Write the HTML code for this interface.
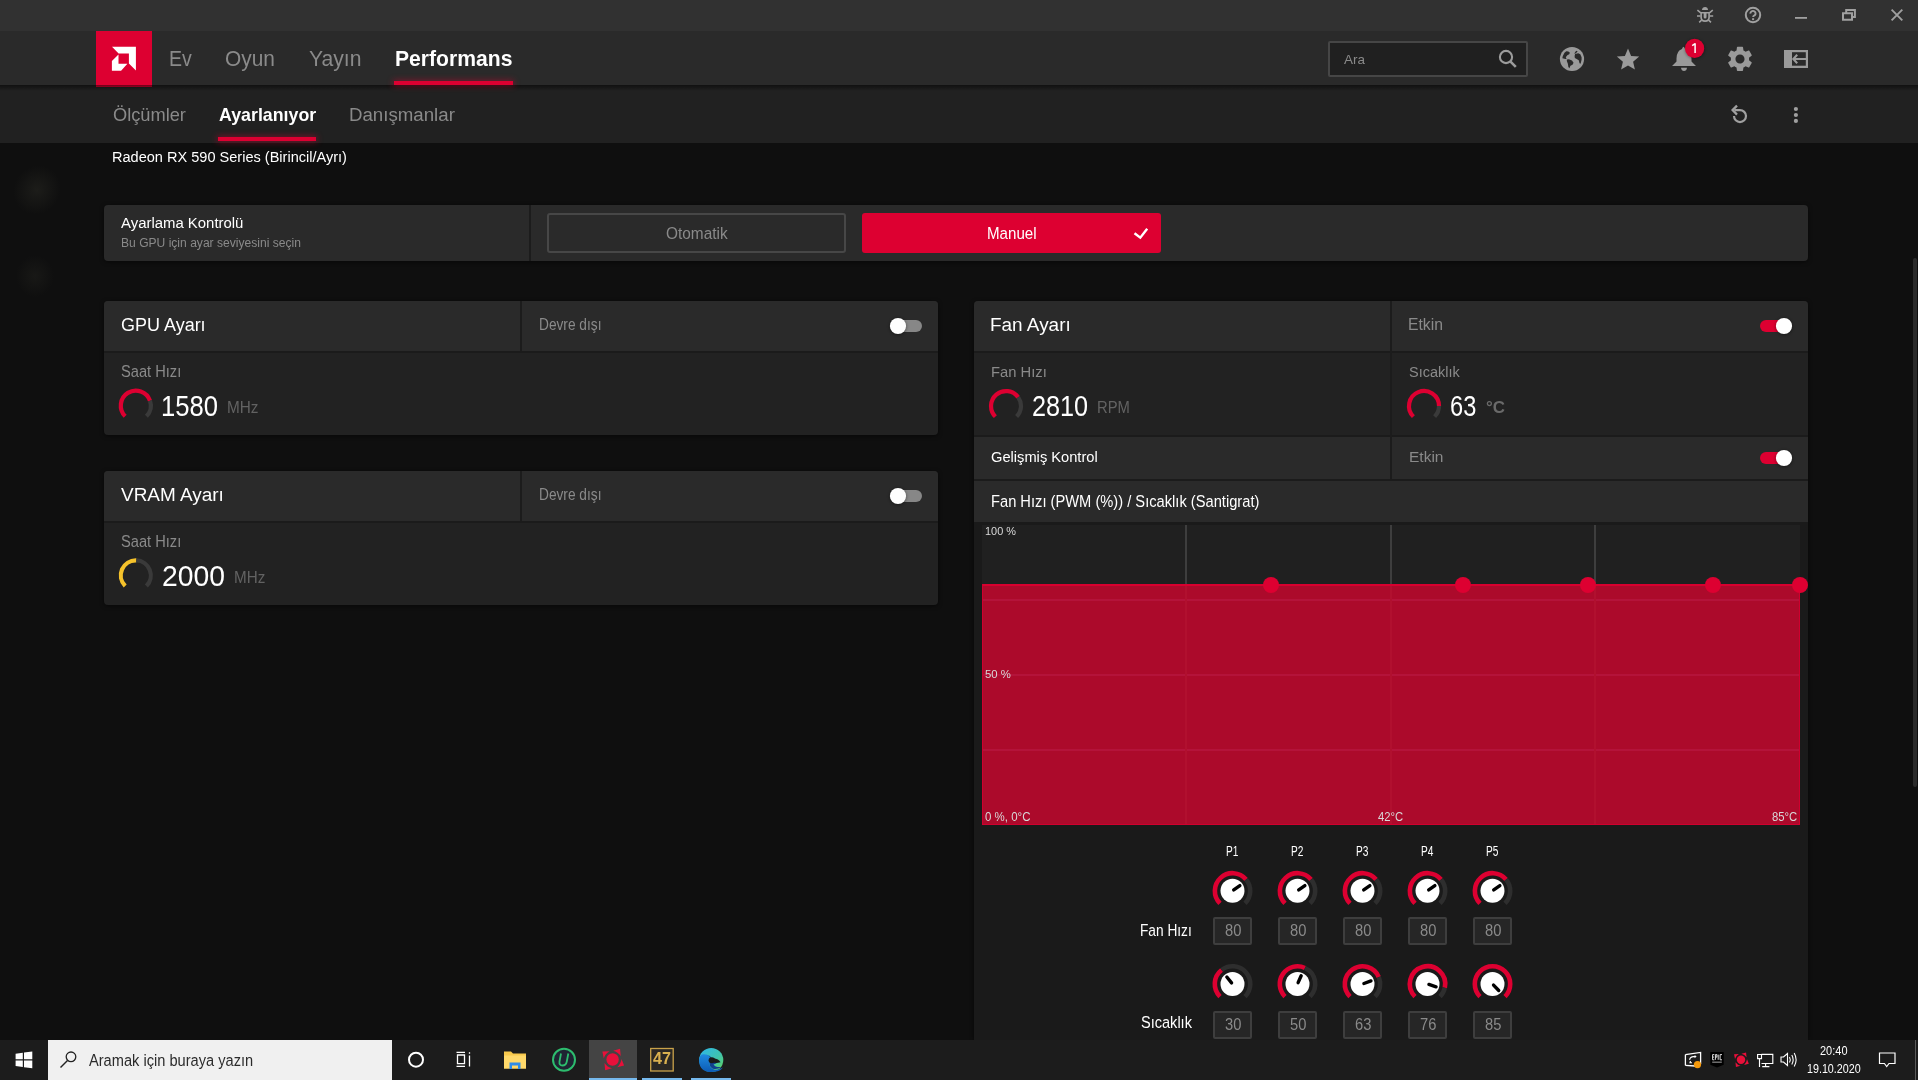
<!DOCTYPE html>
<html><head><meta charset="utf-8"><title>Radeon</title>
<style>
html,body{margin:0;padding:0;width:1918px;height:1080px;overflow:hidden;background:#0f0f0f;}
.b{position:absolute;}
.t{position:absolute;white-space:nowrap;transform-origin:0 0;font-family:"Liberation Sans",sans-serif;}
</style></head>
<body>
<!-- window chrome -->
<div class="b" style="left:0;top:0;width:1918px;height:31px;background:#313131"></div>
<div class="b" style="left:0;top:31px;width:1918px;height:54px;background:#2a2a2a"></div>
<div class="b" style="left:0;top:85px;width:1918px;height:58px;background:#212121"></div>
<div class="b" style="left:96px;top:31px;width:56px;height:56px;background:#dd0031"></div>
<div class="b" style="left:0;top:85px;width:1918px;height:6px;background:linear-gradient(rgba(0,0,0,.5),rgba(0,0,0,0))"></div>
<div class="b" style="left:394px;top:81px;width:119px;height:4px;background:#dd0031;box-shadow:0 0 6px 1px rgba(221,0,49,.45)"></div>
<div class="b" style="left:218px;top:137px;width:98px;height:4px;background:#dd0031;box-shadow:0 0 6px 1px rgba(221,0,49,.45)"></div>
<div class="b" style="left:1328px;top:41px;width:196px;height:32px;border:2px solid #464646;background:#202020;border-radius:2px"></div>
<!-- faint blobs -->
<div class="b" style="left:14px;top:165px;width:46px;height:50px;transform:rotate(35deg);background:radial-gradient(closest-side,rgba(42,42,36,.5),rgba(20,20,20,0));"></div>
<div class="b" style="left:16px;top:255px;width:38px;height:42px;background:radial-gradient(closest-side,rgba(38,38,33,.4),rgba(20,20,20,0));"></div>
<!-- panel: Ayarlama -->
<div class="b" style="left:104px;top:205px;width:1704px;height:56px;background:#2a2a2a;border-radius:4px;box-shadow:0 1px 4px rgba(0,0,0,.55)"></div>
<div class="b" style="left:529px;top:205px;width:2px;height:56px;background:#1c1c1c"></div>
<div class="b" style="left:547px;top:213px;width:295px;height:36px;border:2px solid #474747;border-radius:3px;background:#2a2a2a"></div>
<div class="b" style="left:862px;top:213px;width:299px;height:40px;background:#dd0031;border-radius:3px"></div>
<!-- GPU panel -->
<div class="b" style="left:104px;top:301px;width:834px;height:134px;background:#222222;border-radius:4px;box-shadow:0 1px 4px rgba(0,0,0,.55)"></div>
<div class="b" style="left:104px;top:301px;width:834px;height:50px;background:#2a2a2a;border-radius:4px 4px 0 0"></div>
<div class="b" style="left:104px;top:351px;width:834px;height:2px;background:#1b1b1b"></div>
<div class="b" style="left:520px;top:301px;width:2px;height:50px;background:#1c1c1c"></div>
<!-- VRAM panel -->
<div class="b" style="left:104px;top:471px;width:834px;height:134px;background:#222222;border-radius:4px;box-shadow:0 1px 4px rgba(0,0,0,.55)"></div>
<div class="b" style="left:104px;top:471px;width:834px;height:50px;background:#2a2a2a;border-radius:4px 4px 0 0"></div>
<div class="b" style="left:104px;top:521px;width:834px;height:2px;background:#1b1b1b"></div>
<div class="b" style="left:520px;top:471px;width:2px;height:50px;background:#1c1c1c"></div>
<!-- Fan panel -->
<div class="b" style="left:974px;top:301px;width:834px;height:739px;background:#1a1a1a;border-radius:4px 4px 0 0;box-shadow:0 1px 4px rgba(0,0,0,.55)"></div>
<div class="b" style="left:974px;top:301px;width:834px;height:50px;background:#2a2a2a;border-radius:4px 4px 0 0"></div>
<div class="b" style="left:974px;top:353px;width:834px;height:82px;background:#222222"></div>
<div class="b" style="left:974px;top:437px;width:834px;height:42px;background:#2a2a2a"></div>
<div class="b" style="left:974px;top:481px;width:834px;height:41px;background:#2a2a2a"></div>
<div class="b" style="left:974px;top:351px;width:834px;height:2px;background:#1b1b1b"></div>
<div class="b" style="left:974px;top:435px;width:834px;height:2px;background:#1b1b1b"></div>
<div class="b" style="left:974px;top:479px;width:834px;height:2px;background:#1b1b1b"></div>
<div class="b" style="left:1390px;top:301px;width:2px;height:178px;background:#1c1c1c"></div>
<!-- chart -->
<div class="b" style="left:982px;top:525px;width:818px;height:300px;background:#202020"></div>
<div class="b" style="left:982px;top:584px;width:818px;height:241px;background:#ac0a2b"></div>
<div class="b" style="left:982px;top:584px;width:818px;height:2px;background:#d8002f"></div>
<div class="b" style="left:982px;top:584px;width:1px;height:241px;background:#d0002e"></div>
<div class="b" style="left:1799px;top:584px;width:1px;height:241px;background:#d0002e"></div>
<div class="b" style="left:982px;top:824px;width:818px;height:1px;background:#d0002e"></div>
<div class="b" style="left:983px;top:599px;width:816px;height:2px;background:#b4133a"></div>
<div class="b" style="left:983px;top:674px;width:816px;height:2px;background:#b4133a"></div>
<div class="b" style="left:983px;top:749px;width:816px;height:2px;background:#b4133a"></div>
<div class="b" style="left:1185px;top:525px;width:2px;height:59px;background:#3e3e3e"></div>
<div class="b" style="left:1390px;top:525px;width:2px;height:59px;background:#3e3e3e"></div>
<div class="b" style="left:1594px;top:525px;width:2px;height:59px;background:#3e3e3e"></div>
<div class="b" style="left:1185px;top:586px;width:2px;height:238px;background:#b1102f"></div>
<div class="b" style="left:1390px;top:586px;width:2px;height:238px;background:#b1102f"></div>
<div class="b" style="left:1594px;top:586px;width:2px;height:238px;background:#b1102f"></div>
<!-- knob inputs -->
<div class="b" style="left:1213px;top:917px;width:35px;height:24px;border:2px solid #3e3e3e;background:#262626;border-radius:2px"></div>
<div class="b" style="left:1278px;top:917px;width:35px;height:24px;border:2px solid #3e3e3e;background:#262626;border-radius:2px"></div>
<div class="b" style="left:1343px;top:917px;width:35px;height:24px;border:2px solid #3e3e3e;background:#262626;border-radius:2px"></div>
<div class="b" style="left:1408px;top:917px;width:35px;height:24px;border:2px solid #3e3e3e;background:#262626;border-radius:2px"></div>
<div class="b" style="left:1473px;top:917px;width:35px;height:24px;border:2px solid #3e3e3e;background:#262626;border-radius:2px"></div>
<div class="b" style="left:1213px;top:1011px;width:35px;height:24px;border:2px solid #3e3e3e;background:#262626;border-radius:2px"></div>
<div class="b" style="left:1278px;top:1011px;width:35px;height:24px;border:2px solid #3e3e3e;background:#262626;border-radius:2px"></div>
<div class="b" style="left:1343px;top:1011px;width:35px;height:24px;border:2px solid #3e3e3e;background:#262626;border-radius:2px"></div>
<div class="b" style="left:1408px;top:1011px;width:35px;height:24px;border:2px solid #3e3e3e;background:#262626;border-radius:2px"></div>
<div class="b" style="left:1473px;top:1011px;width:35px;height:24px;border:2px solid #3e3e3e;background:#262626;border-radius:2px"></div>
<!-- scrollbar -->
<div class="b" style="left:1913px;top:258px;width:4px;height:529px;background:#2b2b2b;border-radius:2px"></div>
<!-- taskbar -->

<div class="b" style="left:0;top:1040px;width:1918px;height:40px;background:#1c1c1c"></div>
<div class="b" style="left:48px;top:1040px;width:344px;height:40px;background:#f0f0f0"></div>
<div class="b" style="left:589px;top:1040px;width:48px;height:40px;background:#444444"></div>
<div class="b" style="left:589px;top:1078px;width:48px;height:2px;background:#76b9ed"></div>
<div class="b" style="left:642px;top:1078px;width:40px;height:2px;background:#76b9ed"></div>
<div class="b" style="left:691px;top:1078px;width:40px;height:2px;background:#76b9ed"></div>
<div class="b" style="left:1915px;top:1040px;width:1px;height:40px;background:#5a5a5a"></div>

<svg class="b" style="left:0;top:0" width="1918" height="1080" viewBox="0 0 1918 1080">
<defs><filter id="blur" x="-50%" y="-50%" width="200%" height="200%"><feGaussianBlur stdDeviation="1.5"/></filter></defs>
<path d="M125.19,416.21 A15,15 0 1 1 149.98,400.72" stroke="#dd0031" stroke-width="4.2" fill="none"/>
<path d="M149.98,400.72 A15,15 0 0 1 146.41,416.21" stroke="#3a3a3a" stroke-width="4.2" fill="none"/>
<path d="M125.19,586.01 A15,15 0 0 1 136.32,560.41" stroke="#f5c22b" stroke-width="4.2" fill="none"/>
<path d="M136.32,560.41 A15,15 0 0 1 146.41,586.01" stroke="#3a3a3a" stroke-width="4.2" fill="none"/>
<rect x="892" y="320" width="30" height="12" rx="6" fill="#878787"/>
<circle cx="898" cy="326.6" r="8.6" fill="#000" opacity="0.35" filter="url(#blur)"/>
<circle cx="898" cy="326" r="8.1" fill="#fff"/>
<rect x="892" y="490" width="30" height="12" rx="6" fill="#878787"/>
<circle cx="898" cy="496.6" r="8.6" fill="#000" opacity="0.35" filter="url(#blur)"/>
<circle cx="898" cy="496" r="8.1" fill="#fff"/>
<path d="M995.39,416.61 A15,15 0 1 1 1018.14,397.18" stroke="#dd0031" stroke-width="4.2" fill="none"/>
<path d="M1018.14,397.18 A15,15 0 0 1 1016.61,416.61" stroke="#3a3a3a" stroke-width="4.2" fill="none"/>
<path d="M1413.39,416.61 A15,15 0 1 1 1439.00,406.00" stroke="#dd0031" stroke-width="4.2" fill="none"/>
<path d="M1439.00,406.00 A15,15 0 0 1 1434.61,416.61" stroke="#3a3a3a" stroke-width="4.2" fill="none"/>
<rect x="1760" y="320" width="30" height="12" rx="6" fill="#dd0031"/>
<circle cx="1784" cy="326.6" r="8.6" fill="#000" opacity="0.35" filter="url(#blur)"/>
<circle cx="1784" cy="326" r="8.1" fill="#fff"/>
<rect x="1760" y="452" width="30" height="12" rx="6" fill="#dd0031"/>
<circle cx="1784" cy="458.6" r="8.6" fill="#000" opacity="0.35" filter="url(#blur)"/>
<circle cx="1784" cy="458" r="8.1" fill="#fff"/>
<circle cx="1271" cy="585" r="8" fill="#dd0031"/>
<circle cx="1463" cy="585" r="8" fill="#dd0031"/>
<circle cx="1588" cy="585" r="8" fill="#dd0031"/>
<circle cx="1713" cy="585" r="8" fill="#dd0031"/>
<circle cx="1800" cy="585" r="8" fill="#dd0031"/>
<path d="M1219.98,903.32 A17.7,17.7 0 1 1 1246.06,879.42" stroke="#dd0031" stroke-width="4.6" fill="none"/>
<path d="M1246.06,879.42 A17.7,17.7 0 0 1 1245.02,903.32" stroke="#2e2e2e" stroke-width="4.6" fill="none"/>
<circle cx="1232.5" cy="890.8" r="12" fill="#fff"/>
<line x1="1233.73" y1="889.94" x2="1239.87" y2="885.64" stroke="#000" stroke-width="3.4" stroke-linecap="round"/>
<path d="M1284.98,903.32 A17.7,17.7 0 1 1 1311.06,879.42" stroke="#dd0031" stroke-width="4.6" fill="none"/>
<path d="M1311.06,879.42 A17.7,17.7 0 0 1 1310.02,903.32" stroke="#2e2e2e" stroke-width="4.6" fill="none"/>
<circle cx="1297.5" cy="890.8" r="12" fill="#fff"/>
<line x1="1298.73" y1="889.94" x2="1304.87" y2="885.64" stroke="#000" stroke-width="3.4" stroke-linecap="round"/>
<path d="M1349.98,903.32 A17.7,17.7 0 1 1 1376.06,879.42" stroke="#dd0031" stroke-width="4.6" fill="none"/>
<path d="M1376.06,879.42 A17.7,17.7 0 0 1 1375.02,903.32" stroke="#2e2e2e" stroke-width="4.6" fill="none"/>
<circle cx="1362.5" cy="890.8" r="12" fill="#fff"/>
<line x1="1363.73" y1="889.94" x2="1369.87" y2="885.64" stroke="#000" stroke-width="3.4" stroke-linecap="round"/>
<path d="M1414.98,903.32 A17.7,17.7 0 1 1 1441.06,879.42" stroke="#dd0031" stroke-width="4.6" fill="none"/>
<path d="M1441.06,879.42 A17.7,17.7 0 0 1 1440.02,903.32" stroke="#2e2e2e" stroke-width="4.6" fill="none"/>
<circle cx="1427.5" cy="890.8" r="12" fill="#fff"/>
<line x1="1428.73" y1="889.94" x2="1434.87" y2="885.64" stroke="#000" stroke-width="3.4" stroke-linecap="round"/>
<path d="M1479.98,903.32 A17.7,17.7 0 1 1 1506.06,879.42" stroke="#dd0031" stroke-width="4.6" fill="none"/>
<path d="M1506.06,879.42 A17.7,17.7 0 0 1 1505.02,903.32" stroke="#2e2e2e" stroke-width="4.6" fill="none"/>
<circle cx="1492.5" cy="890.8" r="12" fill="#fff"/>
<line x1="1493.73" y1="889.94" x2="1499.87" y2="885.64" stroke="#000" stroke-width="3.4" stroke-linecap="round"/>
<path d="M1219.98,996.52 A17.7,17.7 0 0 1 1221.60,970.05" stroke="#dd0031" stroke-width="4.6" fill="none"/>
<path d="M1221.60,970.05 A17.7,17.7 0 0 1 1245.02,996.52" stroke="#2e2e2e" stroke-width="4.6" fill="none"/>
<circle cx="1232.5" cy="984" r="12" fill="#fff"/>
<line x1="1231.56" y1="982.83" x2="1226.84" y2="977.01" stroke="#000" stroke-width="3.4" stroke-linecap="round"/>
<path d="M1284.98,996.52 A17.7,17.7 0 0 1 1304.98,967.96" stroke="#dd0031" stroke-width="4.6" fill="none"/>
<path d="M1304.98,967.96 A17.7,17.7 0 0 1 1310.02,996.52" stroke="#2e2e2e" stroke-width="4.6" fill="none"/>
<circle cx="1297.5" cy="984" r="12" fill="#fff"/>
<line x1="1298.11" y1="982.63" x2="1301.16" y2="975.78" stroke="#000" stroke-width="3.4" stroke-linecap="round"/>
<path d="M1349.98,996.52 A17.7,17.7 0 1 1 1378.79,977.08" stroke="#dd0031" stroke-width="4.6" fill="none"/>
<path d="M1378.79,977.08 A17.7,17.7 0 0 1 1375.02,996.52" stroke="#2e2e2e" stroke-width="4.6" fill="none"/>
<circle cx="1362.5" cy="984" r="12" fill="#fff"/>
<line x1="1363.91" y1="983.49" x2="1370.96" y2="980.92" stroke="#000" stroke-width="3.4" stroke-linecap="round"/>
<path d="M1414.98,996.52 A17.7,17.7 0 1 1 1444.81,987.68" stroke="#dd0031" stroke-width="4.6" fill="none"/>
<path d="M1444.81,987.68 A17.7,17.7 0 0 1 1440.02,996.52" stroke="#2e2e2e" stroke-width="4.6" fill="none"/>
<circle cx="1427.5" cy="984" r="12" fill="#fff"/>
<line x1="1428.93" y1="984.46" x2="1436.06" y2="986.78" stroke="#000" stroke-width="3.4" stroke-linecap="round"/>
<path d="M1479.98,996.52 A17.7,17.7 0 1 1 1505.02,996.52" stroke="#dd0031" stroke-width="4.6" fill="none"/>
<path d="M1505.02,996.52 A17.7,17.7 0 0 1 1505.02,996.52" stroke="#2e2e2e" stroke-width="4.6" fill="none"/>
<circle cx="1492.5" cy="984" r="12" fill="#fff"/>
<line x1="1493.54" y1="985.08" x2="1498.75" y2="990.47" stroke="#000" stroke-width="3.4" stroke-linecap="round"/>
<path d="M112,46.7 L135.9,46.7 L135.9,70.4 L128.9,63.6 L128.9,53.4 L118.6,53.4 Z" fill="#fff"/>
<path d="M111.9,61.1 L118.5,54.6 L118.5,63.8 L127.4,63.8 L121.1,70.7 L111.9,70.7 Z" fill="#fff"/>
<path d="M1701.9,9.9 Q1702.3,7 1705.1,7 Q1707.7,7 1708.1,9.9 Z" fill="#a0a0a0"/>
<path d="M1700.3,11.9 L1709.9,11.9 L1709.9,17.2 Q1709.9,21.9 1705.1,21.9 Q1700.3,21.9 1700.3,17.2 Z" fill="#a0a0a0"/>
<path d="M1702.8,13.4 V17.1 A2.3,2.4 0 0 0 1707.4,17.1 V13.4" fill="none" stroke="#313131" stroke-width="1.75"/>
<path d="M1697.4,10.1 L1700.8,12.8 M1712.8,10.1 L1709.4,12.8 M1697,16 L1700.5,16 M1709.7,16 L1713.2,16 M1699.2,22.3 L1701.6,20.2 M1711,22.3 L1708.6,20.2" fill="none" stroke="#a0a0a0" stroke-width="1.6"/>
<circle cx="1753" cy="15" r="7.2" fill="none" stroke="#a0a0a0" stroke-width="2"/>
<path d="M1750.4,13.6 A2.6,2.5 0 1 1 1754.8,15.2 Q1753.1,16 1753.1,17" fill="none" stroke="#a0a0a0" stroke-width="1.9"/>
<rect x="1752.1" y="18.2" width="2" height="1.9" fill="#a0a0a0"/>
<rect x="1795" y="17" width="12" height="1.8" fill="#a0a0a0"/>
<path d="M1843,13.2 h9 v6.6 h-9 Z M1846.2,13.2 v-3.2 h8.7 v7 h-2.9" fill="none" stroke="#a0a0a0" stroke-width="2"/>
<path d="M1891.6,9.6 L1902.3,20.3 M1902.3,9.6 L1891.6,20.3" stroke="#a0a0a0" stroke-width="1.9"/>
<circle cx="1506" cy="57" r="6.1" fill="none" stroke="#9c9c9c" stroke-width="2.1"/>
<path d="M1510.3,61.3 L1515.8,66.8" stroke="#9c9c9c" stroke-width="2.6"/>
<circle cx="1572" cy="59" r="12.1" fill="#9a9a9a"/>
<path d="M1562.41,57.96 L1562.8,55.89 L1564.48,52.78 L1566.3,51.22 L1568.37,51.48 L1569.93,52.78 L1569.15,54.33 L1567.33,55.37 L1565.78,57.19 L1566.56,59.0 L1565.52,59.0 L1562.41,58.22 Z" fill="#2a2a2a"/>
<path d="M1566.9,59.5 L1568.89,59.26 L1572.0,60.56 L1573.56,62.63 L1572.52,64.7 L1570.44,65.74 L1569.41,68.33 L1568.37,67.04 L1567.85,63.67 L1566.82,61.07 Z" fill="#2a2a2a"/>
<path d="M1574.33,53.56 L1576.15,50.7 L1577.7,51.48 L1575.11,53.82 Z" fill="#2a2a2a"/>
<path d="M1574.59,55.89 L1575.11,54.07 L1578.22,53.3 L1580.3,54.33 L1581.59,57.19 L1581.59,59.78 L1580.56,63.67 L1579.52,63.15 L1578.74,60.3 L1576.67,59.0 L1574.85,57.96 Z" fill="#2a2a2a"/>
<path d="M1628,48.5 L1631.1,55.9 L1639.2,56.5 L1633.1,61.8 L1634.9,69.6 L1628,65.5 L1621.1,69.6 L1622.9,61.8 L1616.8,56.5 L1624.9,55.9 Z" fill="#9a9a9a"/>
<path d="M1683.5,46.8 Q1684.8,47.5 1685,49 Q1691.5,51 1691.5,58.5 L1691.5,61.5 L1696,66 L1672,66 L1676.5,61.5 L1676.5,58.5 Q1676.5,51 1682,49 Q1682.2,47.5 1683.5,46.8 Z" fill="#9a9a9a"/>
<path d="M1681,67.8 L1687,67.8 Q1686.5,71 1684,71 Q1681.5,71 1681,67.8 Z" fill="#9a9a9a"/>
<circle cx="1694.8" cy="49" r="10" fill="#000" opacity="0.35" filter="url(#blur)"/>
<circle cx="1694.6" cy="48.4" r="9.6" fill="#dd0031"/>
<path d="M1695.1,43.3 L1695.1,52.9 M1695.1,43.6 L1692.2,45.6" stroke="#fff" stroke-width="1.5" fill="none"/>
<g transform="translate(1724.8,43.8) scale(1.265)"><path fill="#9a9a9a" d="M19.14 12.94c.04-.3.06-.61.06-.94 0-.32-.02-.64-.07-.94l2.03-1.58c.18-.14.23-.41.12-.61l-1.92-3.32c-.12-.22-.37-.29-.59-.22l-2.39.96c-.5-.38-1.03-.7-1.62-.94l-.36-2.54c-.04-.24-.24-.41-.48-.41h-3.84c-.24 0-.43.17-.47.41l-.36 2.54c-.59.24-1.13.57-1.620.94l-2.39-.96c-.22-.08-.47 0-.59.22L2.74 8.87c-.12.21-.08.47.12.61l2.03 1.58c-.05.3-.09.63-.09.94s.02.64.07.94l-2.030 1.58c-.18.14-.23.41-.12.61l1.92 3.32c.12.22.37.29.59.22l2.39-.96c.5.38 1.03.7 1.62.94l.36 2.54c.05.24.24.41.48.41h3.84c.24 0 .44-.17.47-.41l.36-2.54c.59-.24 1.13-.56 1.62-.94l2.39.96c.22.08.47 0 .59-.22l1.92-3.32c.12-.22.07-.47-.12-.61l-2.01-1.58zM12 15.6c-1.98 0-3.6-1.62-3.6-3.6s1.62-3.6 3.6-3.6 3.6 1.62 3.6 3.6-1.62 3.6-3.6 3.6z"/></g>
<rect x="1784" y="50" width="24" height="18" fill="#9a9a9a"/>
<rect x="1792" y="52.2" width="13.8" height="13.5" fill="#2a2a2a"/>
<path d="M1806,59 L1793.5,59 M1797.2,54.8 L1793.3,59 L1797.2,63.2" fill="none" stroke="#9a9a9a" stroke-width="2.1"/>
<path d="M1734,116.1 A6,6 0 1 0 1740,110.1 L1734.5,110.1" fill="none" stroke="#a0a0a0" stroke-width="2.2"/>
<path d="M1737,105.6 L1732.6,110.1 L1737,114.6" fill="none" stroke="#a0a0a0" stroke-width="2.3"/>
<circle cx="1795.9" cy="109" r="2.1" fill="#a0a0a0"/>
<circle cx="1795.9" cy="115" r="2.1" fill="#a0a0a0"/>
<circle cx="1795.9" cy="120.9" r="2.1" fill="#a0a0a0"/>
<path d="M1134.5,233.3 L1140.3,237.7 L1147.2,228.8" fill="none" stroke="#fff" stroke-width="2.4"/>
<path d="M15.6,1053.8 L22.8,1052.8 L22.8,1059.3 L15.6,1059.3 Z M24,1052.6 L32.3,1051.5 L32.3,1059.3 L24,1059.3 Z M15.6,1060.5 L22.8,1060.5 L22.8,1067 L15.6,1066 Z M24,1060.5 L32.3,1060.5 L32.3,1068.2 L24,1067.2 Z" fill="#fff"/>
<circle cx="71" cy="1056.8" r="4.8" fill="none" stroke="#222" stroke-width="1.3"/>
<path d="M67.5,1060.5 L60.5,1067.5" stroke="#222" stroke-width="1.4"/>
<circle cx="416" cy="1059.7" r="7" fill="none" stroke="#fff" stroke-width="2"/>
<path d="M456.5,1052.3 h8.5 M456.5,1066.3 h8.5 M457.5,1055 h7 v8.7 h-7 Z M469.5,1052.3 v1.5 M469.5,1055.5 v11" fill="none" stroke="#fff" stroke-width="1.3"/>
<path d="M504,1051.5 L511,1051.5 L513,1053.5 L526,1053.5 L526,1068.5 L504,1068.5 Z" fill="#f8c94c"/>
<path d="M504,1055.5 L526,1055.5 L526,1068.5 L504,1068.5 Z" fill="#ffd96a"/>
<path d="M509.5,1062.5 L520.5,1062.5 L520.5,1069 L518,1069 L518,1065.5 L512,1065.5 L512,1069 L509.5,1069 Z" fill="#2f8ce8"/>
<circle cx="564" cy="1059.7" r="11" fill="#1f2533" stroke="#2dbd6e" stroke-width="2"/>
<path d="M561,1053.5 L559.5,1061.5 Q559,1065.5 562.5,1065.5 Q566,1065.5 566.8,1061.5 L568.3,1053.5" fill="none" stroke="#2dbd6e" stroke-width="1.8"/>
<g transform="translate(612.6,1059.5) scale(1.0)"><g transform="rotate(-52)"><path d="M0,-13 L-4.6,-7.6 Q0,-9.4 4.6,-7.6 Z" fill="#e8103a"/></g><g transform="rotate(35)"><path d="M0,-13 L-4.6,-7.6 Q0,-9.4 4.6,-7.6 Z" fill="#e8103a"/></g><g transform="rotate(118)"><path d="M0,-13 L-4.6,-7.6 Q0,-9.4 4.6,-7.6 Z" fill="#e8103a"/></g><g transform="rotate(215)"><path d="M0,-13 L-4.6,-7.6 Q0,-9.4 4.6,-7.6 Z" fill="#e8103a"/></g><circle cx="0" cy="0" r="6.2" fill="#e8103a"/></g>
<rect x="650.7" y="1048.5" width="22.5" height="22.5" fill="#2a2724" stroke="#c9a24a" stroke-width="1.3"/>
<defs><linearGradient id="eg" x1="0" y1="0" x2="1" y2="1"><stop offset="0" stop-color="#2cb6ec"/><stop offset="0.55" stop-color="#3fc3b0"/><stop offset="1" stop-color="#62d55a"/></linearGradient><linearGradient id="eb" x1="0" y1="0" x2="0" y2="1"><stop offset="0" stop-color="#1f8be0"/><stop offset="1" stop-color="#0d5bb5"/></linearGradient></defs>
<circle cx="711.2" cy="1060" r="12.1" fill="url(#eg)"/>
<path d="M699.1,1060 Q699.5,1053 706,1054.5 Q712,1056 710,1062 Q708.5,1067.5 714,1069.5 Q717,1070.8 723,1067.5 Q719.5,1072.2 711.2,1072.1 Q699.1,1072 699.1,1060 Z" fill="url(#eb)"/>
<path d="M706,1054.5 Q712,1056 710,1062 Q708.8,1066.5 712.5,1068.5 Q716.5,1070 721.5,1067 Q715,1067.5 713.5,1064.5 Q716.5,1063.8 717.5,1062 Q713,1058 711.5,1058.5 Q711,1055.5 706,1054.5 Z" fill="#113f8f"/>
<ellipse cx="711.8" cy="1060.3" rx="3.2" ry="3" fill="#1a1a1a"/>
<path d="M713,1058 Q719,1059 720.5,1062.3 Q716,1063.5 713.5,1062.5 Z" fill="#1a1a1a"/>
<path d="M1685.4,1054.6 L1700.6,1052.4 L1700.6,1064 M1695,1066 L1685.4,1065.4 Z" fill="none" stroke="#fff" stroke-width="1.3"/>
<path d="M1685.4,1054.6 L1685.4,1065.4" fill="none" stroke="#fff" stroke-width="1.3"/>
<path d="M1689.6,1059.8 Q1690.2,1056.6 1693.5,1056.6 L1695.2,1056.6" fill="none" stroke="#fff" stroke-width="1.1"/>
<path d="M1694.6,1055 L1696.6,1056.6 L1694.6,1058.2 Z" fill="#fff"/>
<path d="M1690.5,1061 L1690,1062.8 L1692,1062.8" fill="none" stroke="#fff" stroke-width="1.1"/>
<circle cx="1697.5" cy="1064.6" r="3.6" fill="#f59a0c"/>
<path d="M1710.3,1052.1 h13.4 v12.6 l-6.7,2.8 l-6.7,-2.8 Z" fill="#000"/>
<path d="M1712.6,1054.6 v5.2 h1.7 M1712.6,1054.6 h1.7 M1712.6,1057.1 h1.4 M1715.4,1059.8 v-5.2 h1.5 v2.5 h-1.5 M1718.2,1054.6 v5.2 M1722,1054.6 h-1.9 v5.2 h1.9" fill="none" stroke="#e8e8e8" stroke-width="0.95"/>
<rect x="1712.2" y="1061.5" width="9.6" height="1.4" fill="#777"/>
<g transform="translate(1741,1059.7) scale(0.68)"><g transform="rotate(-52)"><path d="M0,-13 L-4.6,-7.6 Q0,-9.4 4.6,-7.6 Z" fill="#e8103a"/></g><g transform="rotate(35)"><path d="M0,-13 L-4.6,-7.6 Q0,-9.4 4.6,-7.6 Z" fill="#e8103a"/></g><g transform="rotate(118)"><path d="M0,-13 L-4.6,-7.6 Q0,-9.4 4.6,-7.6 Z" fill="#e8103a"/></g><g transform="rotate(215)"><path d="M0,-13 L-4.6,-7.6 Q0,-9.4 4.6,-7.6 Z" fill="#e8103a"/></g><circle cx="0" cy="0" r="6.2" fill="#e8103a"/></g>
<path d="M1757.6,1054.5 h3.9 v4.1 h-3.9 Z M1759.5,1058.6 V1067 M1761.5,1054.3 h11.3 v9.2 h-11.3 M1765.6,1063.5 v3 M1762.2,1066.6 h7.2" fill="none" stroke="#fff" stroke-width="1.15"/>
<path d="M1781,1057 h2.5 l4,-3.5 v12 l-4,-3.5 h-2.5 Z" fill="none" stroke="#fff" stroke-width="1.1"/>
<path d="M1789.5,1057 Q1791,1059.7 1789.5,1062.5 M1791.8,1055 Q1794.5,1059.7 1791.8,1064.5 M1794.2,1053 Q1798,1059.7 1794.2,1066.5" fill="none" stroke="#fff" stroke-width="1.1"/>
<path d="M1879.5,1053 h15.5 v10.5 h-6 l-2.3,3 l-2.3,-3 h-4.9 Z" fill="none" stroke="#fff" stroke-width="1.2"/>
</svg>
<div class="t" style="left:168.80px;top:48.18px;font-size:22.61px;line-height:22.61px;font-weight:normal;color:#8a8a8a;transform:scaleX(0.8638);">Ev</div>
<div class="t" style="left:224.90px;top:48.18px;font-size:22.61px;line-height:22.61px;font-weight:normal;color:#8a8a8a;transform:scaleX(0.9235);">Oyun</div>
<div class="t" style="left:308.50px;top:48.18px;font-size:22.61px;line-height:22.61px;font-weight:normal;color:#8a8a8a;transform:scaleX(0.9354);">Yayın</div>
<div class="t" style="left:394.60px;top:48.18px;font-size:22.61px;line-height:22.61px;font-weight:bold;color:#ffffff;transform:scaleX(0.9344);">Performans</div>
<div class="t" style="left:112.80px;top:104.54px;font-size:19.13px;line-height:19.13px;font-weight:normal;color:#8a8a8a;transform:scaleX(0.9540);">Ölçümler</div>
<div class="t" style="left:218.50px;top:104.54px;font-size:19.13px;line-height:19.13px;font-weight:bold;color:#ffffff;transform:scaleX(0.9307);">Ayarlanıyor</div>
<div class="t" style="left:348.70px;top:104.54px;font-size:19.13px;line-height:19.13px;font-weight:normal;color:#8a8a8a;transform:scaleX(0.9772);">Danışmanlar</div>
<div class="t" style="left:112.00px;top:149.14px;font-size:15.36px;line-height:15.36px;font-weight:normal;color:#ffffff;transform:scaleX(0.9469);">Radeon RX 590 Series (Birincil/Ayrı)</div>
<div class="t" style="left:1344.00px;top:53.04px;font-size:13.48px;line-height:13.48px;font-weight:normal;color:#8a8a8a;transform:scaleX(1.0004);">Ara</div>
<div class="t" style="left:120.60px;top:215.07px;font-size:15.22px;line-height:15.22px;font-weight:normal;color:#ffffff;transform:scaleX(0.9800);">Ayarlama Kontrolü</div>
<div class="t" style="left:120.60px;top:236.72px;font-size:12.68px;line-height:12.68px;font-weight:normal;color:#8a8a8a;transform:scaleX(0.9530);">Bu GPU için ayar seviyesini seçin</div>
<div class="t" style="left:665.80px;top:224.63px;font-size:16.09px;line-height:16.09px;font-weight:normal;color:#8a8a8a;transform:scaleX(0.9583);">Otomatik</div>
<div class="t" style="left:986.70px;top:224.63px;font-size:16.09px;line-height:16.09px;font-weight:normal;color:#ffffff;transform:scaleX(0.9400);">Manuel</div>
<div class="t" style="left:120.70px;top:315.44px;font-size:19.13px;line-height:19.13px;font-weight:normal;color:#ffffff;transform:scaleX(0.9410);">GPU Ayarı</div>
<div class="t" style="left:538.75px;top:316.70px;font-size:15.65px;line-height:15.65px;font-weight:normal;color:#8a8a8a;transform:scaleX(0.8762);">Devre dışı</div>
<div class="t" style="left:120.70px;top:363.90px;font-size:15.65px;line-height:15.65px;font-weight:normal;color:#8a8a8a;transform:scaleX(0.9368);">Saat Hızı</div>
<div class="t" style="left:161.00px;top:392.26px;font-size:28.99px;line-height:28.99px;font-weight:normal;color:#ffffff;transform:scaleX(0.8838);">1580</div>
<div class="t" style="left:226.70px;top:399.50px;font-size:15.65px;line-height:15.65px;font-weight:normal;color:#626262;transform:scaleX(0.9793);">MHz</div>
<div class="t" style="left:120.70px;top:485.44px;font-size:19.13px;line-height:19.13px;font-weight:normal;color:#ffffff;transform:scaleX(0.9910);">VRAM Ayarı</div>
<div class="t" style="left:538.75px;top:486.70px;font-size:15.65px;line-height:15.65px;font-weight:normal;color:#8a8a8a;transform:scaleX(0.8762);">Devre dışı</div>
<div class="t" style="left:120.70px;top:533.90px;font-size:15.65px;line-height:15.65px;font-weight:normal;color:#8a8a8a;transform:scaleX(0.9368);">Saat Hızı</div>
<div class="t" style="left:162.00px;top:562.26px;font-size:28.99px;line-height:28.99px;font-weight:normal;color:#ffffff;transform:scaleX(0.9769);">2000</div>
<div class="t" style="left:233.75px;top:569.50px;font-size:15.65px;line-height:15.65px;font-weight:normal;color:#626262;transform:scaleX(0.9715);">MHz</div>
<div class="t" style="left:990.00px;top:315.44px;font-size:19.13px;line-height:19.13px;font-weight:normal;color:#ffffff;transform:scaleX(0.9909);">Fan Ayarı</div>
<div class="t" style="left:1408.40px;top:316.70px;font-size:15.65px;line-height:15.65px;font-weight:normal;color:#8a8a8a;transform:scaleX(1.0061);">Etkin</div>
<div class="t" style="left:990.50px;top:363.94px;font-size:15.36px;line-height:15.36px;font-weight:normal;color:#8a8a8a;transform:scaleX(0.9609);">Fan Hızı</div>
<div class="t" style="left:1031.80px;top:392.39px;font-size:28.84px;line-height:28.84px;font-weight:normal;color:#ffffff;transform:scaleX(0.8758);">2810</div>
<div class="t" style="left:1096.60px;top:399.00px;font-size:16.23px;line-height:16.23px;font-weight:normal;color:#626262;transform:scaleX(0.9120);">RPM</div>
<div class="t" style="left:1408.50px;top:363.94px;font-size:15.36px;line-height:15.36px;font-weight:normal;color:#8a8a8a;transform:scaleX(0.9423);">Sıcaklık</div>
<div class="t" style="left:1450.40px;top:392.39px;font-size:28.84px;line-height:28.84px;font-weight:normal;color:#ffffff;transform:scaleX(0.8197);">63</div>
<div class="t" style="left:1485.50px;top:399.00px;font-size:16.23px;line-height:16.23px;font-weight:bold;color:#6a6a6a;transform:scaleX(1.0428);">°C</div>
<div class="t" style="left:990.50px;top:448.72px;font-size:15.51px;line-height:15.51px;font-weight:normal;color:#ffffff;transform:scaleX(0.9460);">Gelişmiş Kontrol</div>
<div class="t" style="left:1408.50px;top:448.72px;font-size:15.51px;line-height:15.51px;font-weight:normal;color:#8a8a8a;transform:scaleX(1.0010);">Etkin</div>
<div class="t" style="left:990.50px;top:492.53px;font-size:16.09px;line-height:16.09px;font-weight:normal;color:#ffffff;transform:scaleX(0.9130);">Fan Hızı (PWM (%)) / Sıcaklık (Santigrat)</div>
<div class="t" style="left:985.00px;top:525.94px;font-size:11.59px;line-height:11.59px;font-weight:normal;color:#d8d8d8;transform:scaleX(0.9431);">100 %</div>
<div class="t" style="left:985.30px;top:668.94px;font-size:11.59px;line-height:11.59px;font-weight:normal;color:#d8d8d8;transform:scaleX(0.9798);">50 %</div>
<div class="t" style="left:985.00px;top:811.70px;font-size:11.88px;line-height:11.88px;font-weight:normal;color:#d8d8d8;transform:scaleX(0.9674);">0 %, 0°C</div>
<div class="t" style="left:1377.90px;top:811.70px;font-size:11.88px;line-height:11.88px;font-weight:normal;color:#d8d8d8;transform:scaleX(0.9525);">42°C</div>
<div class="t" style="left:1771.70px;top:811.70px;font-size:11.88px;line-height:11.88px;font-weight:normal;color:#d8d8d8;transform:scaleX(0.9525);">85°C</div>
<div class="t" style="left:1226.10px;top:844.80px;font-size:13.77px;line-height:13.77px;font-weight:normal;color:#ffffff;transform:scaleX(0.7367);">P1</div>
<div class="t" style="left:1224.60px;top:922.50px;font-size:15.65px;line-height:15.65px;font-weight:normal;color:#8a8a8a;transform:scaleX(0.9418);">80</div>
<div class="t" style="left:1291.10px;top:844.80px;font-size:13.77px;line-height:13.77px;font-weight:normal;color:#ffffff;transform:scaleX(0.7367);">P2</div>
<div class="t" style="left:1289.60px;top:922.50px;font-size:15.65px;line-height:15.65px;font-weight:normal;color:#8a8a8a;transform:scaleX(0.9418);">80</div>
<div class="t" style="left:1356.10px;top:844.80px;font-size:13.77px;line-height:13.77px;font-weight:normal;color:#ffffff;transform:scaleX(0.7367);">P3</div>
<div class="t" style="left:1354.60px;top:922.50px;font-size:15.65px;line-height:15.65px;font-weight:normal;color:#8a8a8a;transform:scaleX(0.9418);">80</div>
<div class="t" style="left:1421.10px;top:844.80px;font-size:13.77px;line-height:13.77px;font-weight:normal;color:#ffffff;transform:scaleX(0.7367);">P4</div>
<div class="t" style="left:1419.60px;top:922.50px;font-size:15.65px;line-height:15.65px;font-weight:normal;color:#8a8a8a;transform:scaleX(0.9418);">80</div>
<div class="t" style="left:1486.10px;top:844.80px;font-size:13.77px;line-height:13.77px;font-weight:normal;color:#ffffff;transform:scaleX(0.7367);">P5</div>
<div class="t" style="left:1484.60px;top:922.50px;font-size:15.65px;line-height:15.65px;font-weight:normal;color:#8a8a8a;transform:scaleX(0.9418);">80</div>
<div class="t" style="left:1224.60px;top:1016.50px;font-size:15.65px;line-height:15.65px;font-weight:normal;color:#8a8a8a;transform:scaleX(0.9418);">30</div>
<div class="t" style="left:1289.60px;top:1016.50px;font-size:15.65px;line-height:15.65px;font-weight:normal;color:#8a8a8a;transform:scaleX(0.9418);">50</div>
<div class="t" style="left:1354.60px;top:1016.50px;font-size:15.65px;line-height:15.65px;font-weight:normal;color:#8a8a8a;transform:scaleX(0.9418);">63</div>
<div class="t" style="left:1419.60px;top:1016.50px;font-size:15.65px;line-height:15.65px;font-weight:normal;color:#8a8a8a;transform:scaleX(0.9418);">76</div>
<div class="t" style="left:1484.60px;top:1016.50px;font-size:15.65px;line-height:15.65px;font-weight:normal;color:#8a8a8a;transform:scaleX(0.9418);">85</div>
<div class="t" style="left:1140.00px;top:922.63px;font-size:16.67px;line-height:16.67px;font-weight:normal;color:#ffffff;transform:scaleX(0.8222);">Fan Hızı</div>
<div class="t" style="left:1141.00px;top:1014.50px;font-size:15.65px;line-height:15.65px;font-weight:normal;color:#ffffff;transform:scaleX(0.9303);">Sıcaklık</div>
<div class="t" style="left:88.60px;top:1053.45px;font-size:15.94px;line-height:15.94px;font-weight:normal;color:#2b2b2b;transform:scaleX(0.9174);">Aramak için buraya yazın</div>
<div class="t" style="left:1819.70px;top:1044.83px;font-size:12.32px;line-height:12.32px;font-weight:normal;color:#ffffff;transform:scaleX(0.8920);">20:40</div>
<div class="t" style="left:1807.40px;top:1062.78px;font-size:12.61px;line-height:12.61px;font-weight:normal;color:#ffffff;transform:scaleX(0.8494);">19.10.2020</div>
<div class="t" style="left:653.00px;top:1051.45px;font-size:15.94px;line-height:15.94px;font-weight:bold;color:#d9b050;transform:scaleX(1.0149);">47</div>
</body></html>
